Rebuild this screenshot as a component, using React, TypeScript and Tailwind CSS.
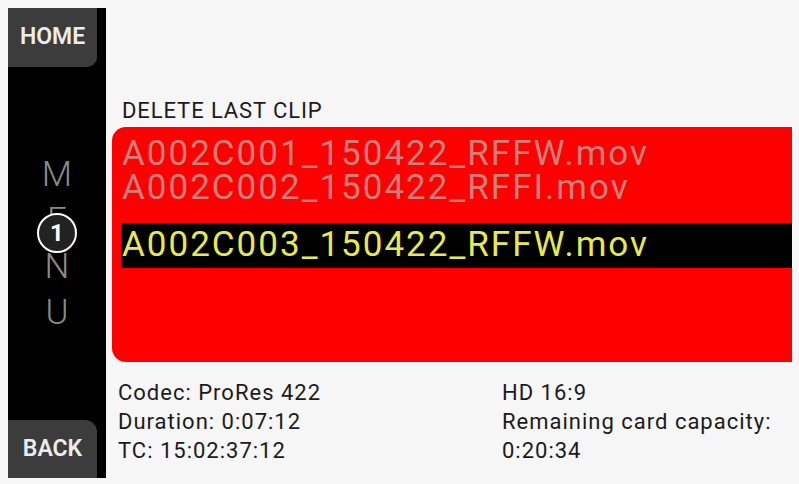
import React from 'react';

const clips = [
  {name: 'A002C001_150422_RFFW.mov', selected: false},
  {name: 'A002C002_150422_RFFI.mov', selected: false},
  {name: 'A002C003_150422_RFFW.mov', selected: true}
];

/** Side rail with HOME / MENU / BACK soft keys. */
function SideRail() {
  return (
    <aside className="flex w-[98px] shrink-0 flex-col justify-between bg-black">
      <div className="flex h-[59px] w-[89px] items-center justify-center rounded-br-[10px] bg-[#3c3c3c] text-[23px] font-semibold text-[#ececec]">
        HOME
      </div>
      <div className="relative flex flex-col items-center text-[35px] font-light leading-[46px] text-[#8a8a8a]">
        <span>M</span>
        <span>E</span>
        <span>N</span>
        <span>U</span>
        <div className="absolute left-1/2 top-[61px] flex h-[40px] w-[40px] -translate-x-1/2 items-center justify-center rounded-full border-2 border-white bg-[#222] text-[24px] font-bold leading-none text-white">
          1
        </div>
      </div>
      <div className="flex h-[58px] w-[89px] items-center justify-center rounded-tr-[12px] bg-[#3c3c3c] text-[23px] font-semibold text-[#ececec]">
        BACK
      </div>
    </aside>
  );
}

export default function App() {
  return (
    <div
      className="flex h-[484px] w-[799px] bg-[#f6f6f6] pb-[6px] pl-2 pr-[7px] pt-2"
      style={{fontFamily: 'Roboto, "Noto Sans", sans-serif'}}
    >
      <SideRail />
      <main className="flex min-w-0 flex-1 flex-col">
        <div className="pl-[16px] pt-[92px] text-[22px] leading-[22px] tracking-[0.9px] text-[#1b1b1b]">
          DELETE LAST CLIP
        </div>
        <div className="ml-[6px] mt-[5px] h-[235px] rounded-l-[14px] bg-[#fe0000] pt-[10px]">
          {clips.map((clip) =>
            clip.selected ? (
              <div
                key={clip.name}
                className="ml-[9px] mt-[18px] flex h-[45px] items-center bg-black pl-[1px] text-[35px] tracking-[2px] text-[#e8ea4c]"
              >
                {clip.name}
              </div>
            ) : (
              <div
                key={clip.name}
                className="pl-[10px] text-[35px] leading-[34px] tracking-[2px] text-[#d0807a]"
              >
                {clip.name}
              </div>
            )
          )}
        </div>
        <div className="mt-[16px] grid grid-cols-[384px_1fr] pl-[12px] text-[22px] leading-[29px] tracking-[1px] text-[#1b1b1b]">
          <div>
            <div>Codec: ProRes 422</div>
            <div>Duration: 0:07:12</div>
            <div>TC: 15:02:37:12</div>
          </div>
          <div>
            <div>HD 16:9</div>
            <div>Remaining card capacity:</div>
            <div>0:20:34</div>
          </div>
        </div>
      </main>
    </div>
  );
}
